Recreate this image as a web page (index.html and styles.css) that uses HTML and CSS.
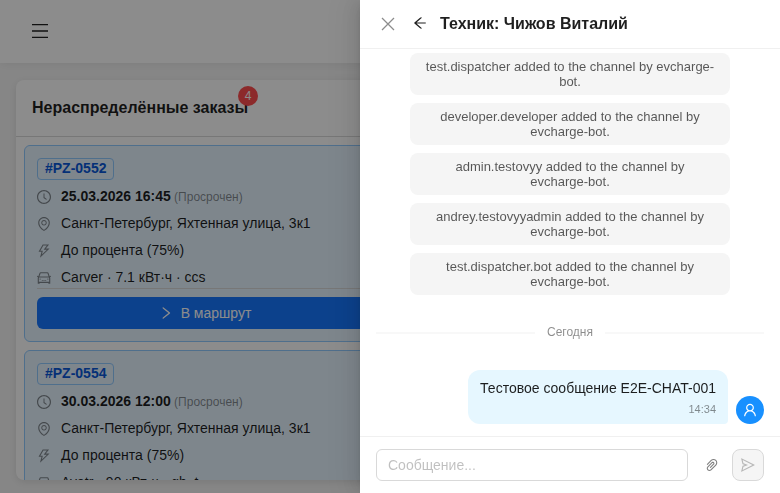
FILE: index.html
```html
<!DOCTYPE html>
<html lang="ru">
<head>
    <meta charset="UTF-8">
    <meta name="viewport" content="width=device-width, initial-scale=1.0">
    <title>Нераспределённые заказы</title>
    <link rel="stylesheet" href="styles.css">
</head>
<body>

    <!-- Icon set -->
    <svg class="sprite" aria-hidden="true">
        <symbol id="i-clock" viewBox="64 64 896 896"><path d="M512 64C264.6 64 64 264.6 64 512s200.6 448 448 448 448-200.6 448-448S759.4 64 512 64zm0 820c-205.4 0-372-166.6-372-372s166.6-372 372-372 372 166.6 372 372-166.6 372-372 372z"/><path d="M686.7 638.6L544.1 535.5V288c0-4.4-3.6-8-8-8H488c-4.4 0-8 3.6-8 8v275.4c0 2.6 1.2 5 3.3 6.5l165.4 120.6c3.6 2.6 8.6 1.8 11.2-1.7l28.6-39c2.6-3.7 1.8-8.7-1.8-11.2z"/></symbol>
        <symbol id="i-pin" viewBox="64 64 896 896"><path d="M854.6 289.1a362.49 362.49 0 00-79.9-115.7 370.83 370.83 0 00-118.2-77.8C610.7 76.6 562.1 67 512 67c-50.1 0-98.7 9.6-144.5 28.5-44.3 18.3-84 44.5-118.2 77.8A363.6 363.6 0 00169.4 289c-19.5 45-29.4 92.8-29.4 142 0 70.6 16.9 140.9 50.1 208.7 26.7 54.5 64 107.6 111 158.1 80.3 86.2 164.5 138.9 188.4 153a43.9 43.9 0 0022.4 6.1c7.8 0 15.5-2 22.4-6.1 23.9-14.1 108.1-66.8 188.4-153 47-50.4 84.3-103.6 111-158.1C867.1 572 884 501.8 884 431.1c0-49.2-9.9-97-29.4-142zM512 880.2c-65.9-41.9-300-207.8-300-449.1 0-77.9 31.1-151.1 87.6-206.3C356.3 169.5 431.7 139 512 139s155.7 30.5 212.4 85.9C780.9 280 812 353.2 812 431.1c0 241.3-234.1 407.2-300 449.1zm0-617.2c-97.2 0-176 78.8-176 176s78.8 176 176 176 176-78.8 176-176-78.8-176-176-176zm79.2 255.2A111.6 111.6 0 01512 551c-29.9 0-58-11.7-79.2-32.8A111.6 111.6 0 01400 439c0-29.9 11.7-58 32.8-79.2C454 338.6 482.1 327 512 327c29.9 0 58 11.6 79.2 32.8C612.4 381 624 409.1 624 439c0 29.9-11.6 58-32.8 79.2z"/></symbol>
        <symbol id="i-bolt" viewBox="64 64 896 896"><path d="M848 359.3H627.7L825.8 109c4.1-5.3.4-13-6.3-13H436c-2.8 0-5.5 1.5-6.9 4L170 547.5c-3.1 5.3.7 12 6.9 12h174.4l-89.4 357.6c-1.9 7.8 7.5 13.3 13.3 7.7L853.5 373c5.2-4.9 1.7-13.7-5.5-13.7zM378.2 732.5l60.3-241H281.1l189.6-327.4h224.6L487 427.4h211L378.2 732.5z"/></symbol>
        <symbol id="i-car" viewBox="64 64 896 896"><path d="M380 704h264c4.4 0 8-3.6 8-8v-40c0-4.4-3.6-8-8-8h-36c-4.4 0-8 3.6-8 8v16H424v-16c0-4.4-3.6-8-8-8h-36c-4.4 0-8 3.6-8 8v40c0 4.4 3.6 8 8 8zm340-123a40 40 0 1080 0 40 40 0 10-80 0zm239-167.6L935.3 372a8 8 0 00-10.9-2.9l-50.7 29.6-78.3-216.2a63.9 63.9 0 00-60.9-44.4H301.2c-34.7 0-65.5 22.4-76.2 55.5l-74.6 205.2-50.8-29.6a8 8 0 00-10.9 2.9L65 413.4c-2.2 3.8-.9 8.6 2.9 10.8l60.4 35.2-14.5 40c-1.2 3.2-1.8 6.6-1.8 10v348.2c0 15.7 11.8 28.4 26.3 28.4h67.6c12.3 0 23-9.3 25.6-22.3l7.7-37.7h545.6l7.7 37.7c2.7 13 13.3 22.3 25.6 22.3h67.6c14.5 0 26.3-12.7 26.3-28.4V509.4c0-3.4-.6-6.8-1.8-10l-14.5-40 60.3-35.2a8 8 0 003-10.8zM840 517v237H184V517l15.6-43h624.8l15.6 43zM292.7 218.1l.5-1.3.4-1.3c1.1-3.3 4.1-5.5 7.6-5.5h427.6l75.4 208H220l72.7-199.9zM224 581a40 40 0 1080 0 40 40 0 10-80 0z"/></symbol>
        <symbol id="i-right" viewBox="64 64 896 896"><path d="M765.7 486.8L314.9 134.7A7.97 7.97 0 00302 141v77.3c0 4.9 2.3 9.6 6.1 12.6l360 281.1-360 281.1c-3.9 3-6.1 7.7-6.1 12.6V883c0 6.7 7.7 10.4 12.9 6.3l450.8-352.1a31.96 31.96 0 000-50.4z"/></symbol>
        <symbol id="i-back" viewBox="64 64 896 896"><path d="M872 474H286.9l350.2-304c5.6-4.9 2.2-14-5.2-14h-88.5c-3.9 0-7.6 1.4-10.5 3.9L155 487.8a31.96 31.96 0 000 48.3L535.1 866c1.5 1.3 3.3 2 5.2 2h91.5c7.4 0 10.8-9.2 5.2-14L286.9 550H872c4.4 0 8-3.6 8-8v-60c0-4.4-3.6-8-8-8z"/></symbol>
        <symbol id="i-close" viewBox="0 0 16 16"><path d="M2 2l12 12M14 2L2 14" fill="none" stroke="currentColor" stroke-width="1.3"/></symbol>
        <symbol id="i-user" viewBox="64 64 896 896"><path d="M858.5 763.6a374 374 0 00-80.6-119.5 375.63 375.63 0 00-119.5-80.6c-.4-.2-.8-.3-1.2-.5C719.5 518 760 444.7 760 362c0-137-111-248-248-248S264 225 264 362c0 82.7 40.5 156 102.8 201.1-.4.2-.8.3-1.2.5-44.8 18.9-85 46-119.5 80.6a375.63 375.63 0 00-80.6 119.5A371.7 371.7 0 00136 901.8a8 8 0 008 8.2h60c4.4 0 7.9-3.5 8-7.8 2-77.2 33-149.5 87.8-204.3 56.7-56.7 132-87.9 212.2-87.9s155.5 31.2 212.2 87.9C779 752.7 810 825 812 902.2c.1 4.4 3.6 7.8 8 7.8h60a8 8 0 008-8.2c-1-47.8-10.9-94.3-29.5-138.2zM512 534c-45.9 0-89.1-17.9-121.6-50.4S340 407.9 340 362c0-45.9 17.9-89.1 50.4-121.6S466.1 190 512 190s89.1 17.9 121.6 50.4S684 316.1 684 362c0 45.9-17.9 89.1-50.4 121.6S557.9 534 512 534z"/></symbol>
        <symbol id="i-clip" viewBox="64 64 896 896"><path d="M779.3 196.6c-94.2-94.2-247.6-94.2-341.7 0l-261 260.8c-1.7 1.7-2.6 4-2.6 6.4s.9 4.7 2.6 6.4l36.9 36.9a9 9 0 0012.7 0l261-260.8c32.4-32.4 75.5-50.2 121.3-50.2s88.9 17.8 121.2 50.2c32.4 32.4 50.2 75.5 50.2 121.2 0 45.8-17.8 88.8-50.2 121.2l-266 265.9-43.1 43.1c-40.3 40.3-105.8 40.3-146.1 0-19.5-19.5-30.2-45.4-30.2-73s10.7-53.5 30.2-73l263.9-263.8c6.7-6.6 15.5-10.3 24.9-10.3h.1c9.4 0 18.1 3.7 24.7 10.3 6.7 6.7 10.3 15.5 10.3 24.9 0 9.3-3.7 18.1-10.3 24.7L372.4 653c-1.7 1.7-2.6 4-2.6 6.4s.9 4.7 2.6 6.4l36.9 36.9a9 9 0 0012.7 0l215.6-215.6c19.9-19.9 30.8-46.3 30.8-74.4s-11-54.6-30.8-74.4c-41.1-41.1-107.9-41-149 0L463 364 224.8 602.1A172.22 172.22 0 00174 724.8c0 46.3 18.1 89.8 50.8 122.5 33.9 33.8 78.3 50.7 122.7 50.7 44.4 0 88.8-16.9 122.6-50.7l309.2-309C824.8 492.7 850 432 850 367.5c.1-64.6-25.1-125.3-70.7-170.9z"/></symbol>
        <symbol id="i-send" viewBox="64 64 896 896"><path d="M931.4 498.9L94.9 79.5c-3.4-1.7-7.3-2.1-11-1.2a15.99 15.99 0 00-11.7 19.3l86.2 352.2c1.3 5.3 5.2 9.6 10.4 11.3l147.7 50.7-147.6 50.7c-5.2 1.8-9.1 6-10.3 11.3L72.2 926.5c-.9 3.7-.5 7.6 1.2 10.9 3.9 7.9 13.5 11.1 21.5 7.2l836.5-417c3.1-1.5 5.6-4.1 7.2-7.1 3.9-8 .7-17.6-7.2-21.6zM170.8 826.3l50.3-205.6 295.2-101.3c2.3-.8 4.2-2.6 5-5 1.4-4.2-.8-8.7-5-10.2L221.1 403 171 198.2l628 314.9-628.2 313.2z"/></symbol>
        <symbol id="i-menu" viewBox="0 0 16 16"><path d="M0 1.6h16M0 8h16M0 14.4h16" fill="none" stroke="currentColor" stroke-width="1.3"/></symbol>
    </svg>

    <header class="topbar">
        <button class="icon-btn menu-btn" type="button" aria-label="Меню"><svg class="icon"><use href="#i-menu"/></svg></button>
    </header>

    <main class="page">
        <section class="panel">
            <div class="panel-head">
                <h2 class="panel-title">Нераспределённые заказы<span class="badge">4</span></h2>
            </div>
            <div class="orders">
                <article class="order">
                    <span class="order-tag">#PZ-0552</span>
                    <ul class="order-info">
                        <li><svg class="icon"><use href="#i-clock"/></svg><span><b>25.03.2026 16:45</b><small> (Просрочен)</small></span></li>
                        <li><svg class="icon"><use href="#i-pin"/></svg><span>Санкт-Петербург, Яхтенная улица, 3к1</span></li>
                        <li><svg class="icon"><use href="#i-bolt"/></svg><span>До процента (75%)</span></li>
                        <li><svg class="icon"><use href="#i-car"/></svg><span>Carver · 7.1 кВт·ч · ccs</span></li>
                    </ul>
                    <div class="order-actions">
                        <button class="route-btn" type="button"><svg class="icon"><use href="#i-right"/></svg>В маршрут</button>
                    </div>
                </article>
                <article class="order">
                    <span class="order-tag">#PZ-0554</span>
                    <ul class="order-info">
                        <li><svg class="icon"><use href="#i-clock"/></svg><span><b>30.03.2026 12:00</b><small> (Просрочен)</small></span></li>
                        <li><svg class="icon"><use href="#i-pin"/></svg><span>Санкт-Петербург, Яхтенная улица, 3к1</span></li>
                        <li><svg class="icon"><use href="#i-bolt"/></svg><span>До процента (75%)</span></li>
                        <li><svg class="icon"><use href="#i-car"/></svg><span>Avatr · 90 кВт·ч · gb_t</span></li>
                    </ul>
                </article>
            </div>
        </section>
    </main>

    <!-- Chat drawer -->
    <div class="mask"></div>
    <aside class="drawer">
        <header class="drawer-head">
            <button class="icon-btn close-btn" type="button" aria-label="Закрыть"><svg class="icon"><use href="#i-close"/></svg></button>
            <button class="icon-btn back-btn" type="button" aria-label="Назад"><svg class="icon"><use href="#i-back"/></svg></button>
            <h1 class="drawer-title">Техник: Чижов Виталий</h1>
        </header>

        <div class="chat">
            <p class="system">test.dispatcher added to the channel by evcharge-bot.</p>
            <p class="system">developer.developer added to the channel by evcharge-bot.</p>
            <p class="system">admin.testovyy added to the channel by evcharge-bot.</p>
            <p class="system">andrey.testovyyadmin added to the channel by evcharge-bot.</p>
            <p class="system">test.dispatcher.bot added to the channel by evcharge-bot.</p>
            <div class="day">Сегодня</div>
            <div class="message">
                <div class="bubble">
                    <p class="bubble-text">Тестовое сообщение E2E-CHAT-001</p>
                    <time class="bubble-time">14:34</time>
                </div>
                <span class="avatar"><svg class="icon"><use href="#i-user"/></svg></span>
            </div>
        </div>

        <form class="composer">
            <input class="composer-input" type="text" placeholder="Сообщение..." aria-label="Сообщение">
            <div class="composer-actions">
                <button class="icon-btn clip-btn" type="button" aria-label="Прикрепить файл"><svg class="icon"><use href="#i-clip"/></svg></button>
                <button class="send-btn" type="submit" aria-label="Отправить" disabled><svg class="icon"><use href="#i-send"/></svg></button>
            </div>
        </form>
    </aside>

</body>
</html>
```
FILE: styles.css
```css
* {
    box-sizing: border-box;
}

body {
    margin: 0;
    height: 100vh;
    overflow: hidden;
    background: #f5f5f5;
    color: rgba(0, 0, 0, 0.88);
    font-family: "Liberation Sans", Arial, sans-serif;
    font-size: 14px;
    line-height: 21px;
}

h1, h2, p, ul {
    margin: 0;
    padding: 0;
}

button, input {
    font: inherit;
}

.sprite {
    display: none;
}

.icon {
    display: block;
    flex: none;
    width: 14px;
    height: 14px;
    fill: currentColor;
}

.icon-btn {
    display: flex;
    align-items: center;
    justify-content: center;
    padding: 0;
    border: 0;
    background: none;
    color: inherit;
    cursor: pointer;
}

/* Top bar */
.topbar {
    display: flex;
    align-items: center;
    height: 63px;
    padding: 0 32px 2px;
    background: #fff;
    box-shadow: 0 2px 8px rgba(0, 0, 0, 0.06);
}

.menu-btn .icon {
    width: 16px;
    height: 16px;
}

/* Orders panel */
.page {
    display: flex;
    padding: 17px 16px;
}

.panel {
    flex: 0 1 378px;
    height: 400px;
    overflow: hidden;
    background: #fff;
    border-radius: 8px;
    box-shadow: 0 2px 8px rgba(0, 0, 0, 0.1);
}

.panel-head {
    display: flex;
    align-items: center;
    height: 57px;
    padding: 0 16px;
    border-bottom: 1px solid #d9d9d9;
}

.panel-title {
    position: relative;
    font-size: 16px;
    line-height: 24px;
}

.badge {
    position: absolute;
    top: -10px;
    right: -10px;
    width: 20px;
    height: 20px;
    border-radius: 10px;
    background: #ff4d4f;
    color: #fff;
    font-size: 12px;
    font-weight: 400;
    line-height: 20px;
    text-align: center;
}

.orders {
    display: flex;
    flex-direction: column;
    gap: 8px;
    padding: 8px;
}

.order {
    padding: 12px;
    border: 1px solid #91caff;
    border-radius: 6px;
    background: #e6f4ff;
}

.order-tag {
    display: table;
    padding: 0 7px 2px;
    border: 1px solid #91caff;
    border-radius: 4px;
    color: #0958d9;
    font-weight: 700;
    line-height: 18px;
}

.order-info {
    display: flex;
    flex-direction: column;
    gap: 6px;
    margin-top: 6px;
    list-style: none;
}

.order-info li {
    display: flex;
    align-items: center;
    gap: 10px;
}

.order-info .icon,
.order-info small {
    color: rgba(0, 0, 0, 0.45);
}

.order-info small {
    font-size: 12px;
    line-height: 12px;
}

.order-actions {
    padding-top: 8px;
    border-top: 1px solid #d9d9d9;
}

.route-btn {
    display: flex;
    align-items: center;
    justify-content: center;
    gap: 8px;
    width: 100%;
    height: 32px;
    border: 0;
    border-radius: 6px;
    background: #1677ff;
    color: #fff;
    cursor: pointer;
}

/* Chat drawer */
.mask {
    position: fixed;
    inset: 0;
    background: rgba(0, 0, 0, 0.45);
}

.drawer {
    position: fixed;
    top: 0;
    right: 0;
    bottom: 0;
    display: flex;
    flex-direction: column;
    width: 420px;
    max-width: 100%;
    background: #fff;
    box-shadow: -6px 0 16px 0 rgba(0, 0, 0, 0.08), -3px 0 6px -4px rgba(0, 0, 0, 0.12), -9px 0 28px 8px rgba(0, 0, 0, 0.05);
}

.drawer-head {
    display: flex;
    align-items: center;
    height: 49px;
    padding: 0 20px;
    border-bottom: 1px solid #f0f0f0;
}

.close-btn {
    margin-right: 16px;
    color: rgba(0, 0, 0, 0.45);
}

.close-btn .icon {
    width: 16px;
    height: 16px;
}

.back-btn {
    width: 16px;
    height: 16px;
    margin-right: 12px;
    padding-bottom: 2px;
}

.drawer-title {
    font-size: 16px;
    line-height: 24px;
}

.chat {
    display: flex;
    flex: 1;
    flex-direction: column;
    justify-content: flex-end;
    gap: 8px;
    padding: 0 16px 12px;
    overflow: hidden;
}

.system {
    align-self: center;
    width: 320px;
    max-width: 100%;
    padding: 6px 15px;
    border-radius: 8px;
    background: #f5f5f5;
    color: rgba(0, 0, 0, 0.65);
    font-size: 13px;
    line-height: 15px;
    text-align: center;
}

.day {
    display: flex;
    align-items: center;
    gap: 12px;
    margin: 19px 0;
    color: rgba(0, 0, 0, 0.45);
    font-size: 12px;
}

.day::before,
.day::after {
    content: "";
    flex: 1;
    height: 2px;
    background: #f8f8f8;
}

.message {
    display: flex;
    align-items: flex-end;
    justify-content: flex-end;
    gap: 8px;
}

.bubble {
    padding: 8px 12px;
    border-radius: 12px 12px 4px 12px;
    background: #e6f7ff;
    text-align: right;
}

.bubble-time {
    display: block;
    margin-top: 4px;
    color: rgba(0, 0, 0, 0.45);
    font-size: 11px;
    line-height: 13px;
}

.avatar {
    display: flex;
    align-items: center;
    justify-content: center;
    width: 28px;
    height: 28px;
    border-radius: 50%;
    background: #1890ff;
    color: #fff;
}

.composer {
    display: flex;
    gap: 8px;
    padding: 12px 16px;
    border-top: 1px solid #f0f0f0;
}

.composer-input {
    flex: 1;
    min-width: 0;
    height: 32px;
    padding: 0 11px;
    border: 1px solid #d9d9d9;
    border-radius: 6px;
    background: #fff;
    color: inherit;
}

.composer-input::placeholder {
    color: rgba(0, 0, 0, 0.25);
}

.composer-actions {
    display: flex;
    gap: 4px;
}

.clip-btn {
    width: 32px;
    height: 32px;
    color: rgba(0, 0, 0, 0.5);
}

.send-btn {
    display: flex;
    align-items: center;
    justify-content: center;
    width: 32px;
    height: 32px;
    padding: 0;
    border: 1px solid #d9d9d9;
    border-radius: 8px;
    background: #f5f5f5;
    color: rgba(0, 0, 0, 0.25);
}
```
